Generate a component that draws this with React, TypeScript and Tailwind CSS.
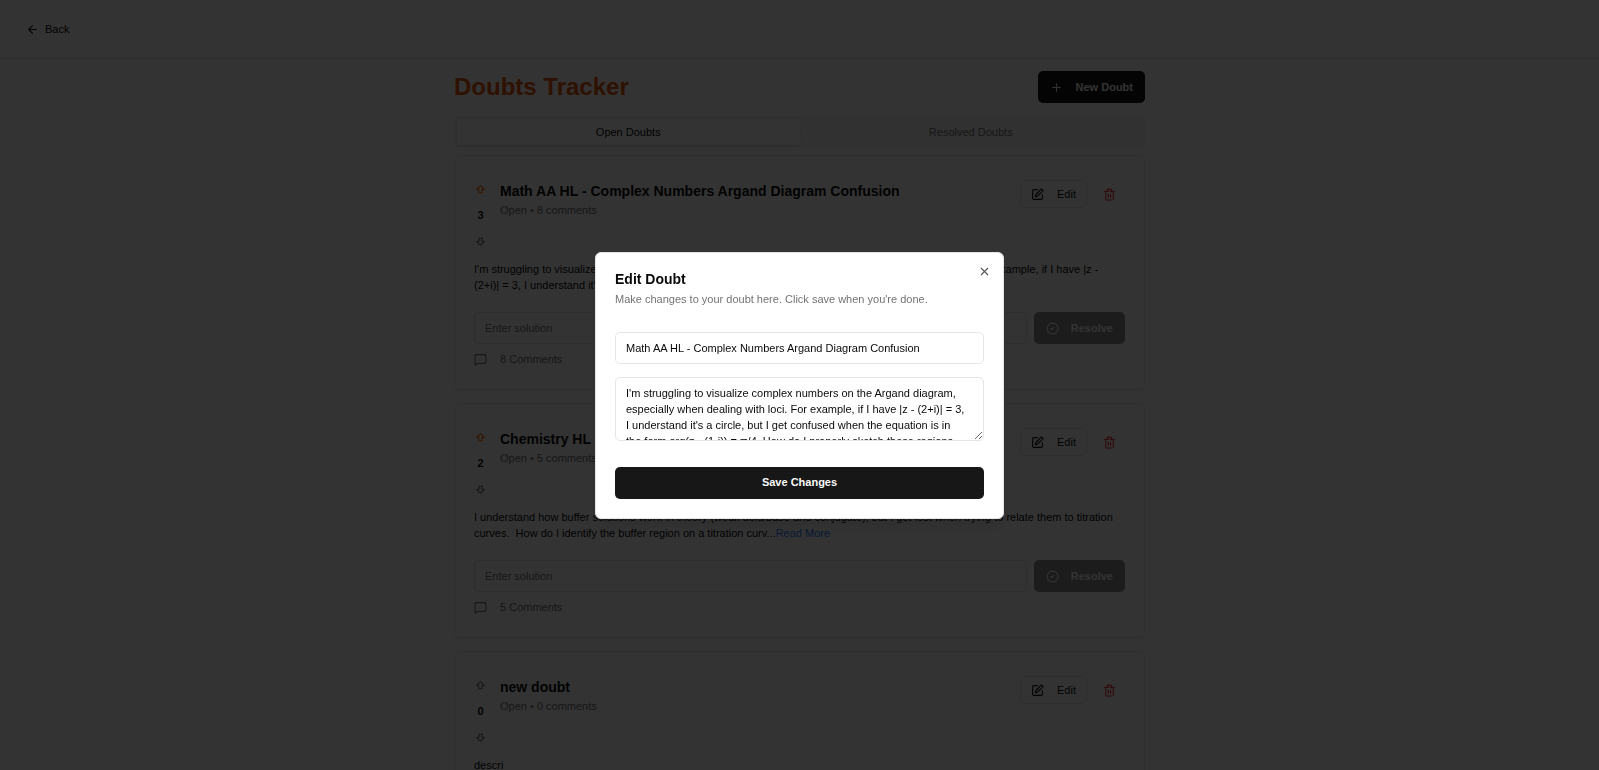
import { useState } from 'react';
import type { ReactNode } from 'react';
import { ArrowLeft, CircleCheck, MessageSquare, Plus, Trash2, X } from 'lucide-react';

type Doubt = {
  id: string;
  title: string;
  votes: number;
  voted: boolean;
  comments: number;
  body: string;
  truncated: boolean;
};

const doubts: Doubt[] = [
  {
    id: 'complex-numbers',
    title: 'Math AA HL - Complex Numbers Argand Diagram Confusion',
    votes: 3,
    voted: true,
    comments: 8,
    body: "I'm struggling to visualize complex numbers on the Argand diagram, especially when dealing with loci.  For example, if I have |z -\n(2+i)| = 3, I understand it's a circle, but I get confused when the equ...",
    truncated: true,
  },
  {
    id: 'buffers',
    title: 'Chemistry HL - Buffer Solutions and Titration Curves',
    votes: 2,
    voted: true,
    comments: 5,
    body: 'I understand how buffer solutions work in theory (weak acid/base and conjugate), but I get lost when trying to relate them to titration curves.  How do I identify the buffer region on a titration curv...',
    truncated: true,
  },
  {
    id: 'new-doubt',
    title: 'new doubt',
    votes: 0,
    voted: false,
    comments: 0,
    body: 'descri',
    truncated: false,
  },
];

const editedBody =
  "I'm struggling to visualize complex numbers on the Argand diagram, especially when dealing with loci. For example, if I have |z - (2+i)| = 3,\nI understand it's a circle, but I get confused when the equation is in\nthe form arg(z - (1-i)) = π/4. How do I properly sketch these regions\nand find their intersections?";

function Icon({ children }: { children: ReactNode }) {
  return (
    <svg
      viewBox="0 0 24 24"
      fill="none"
      stroke="currentColor"
      strokeWidth="2"
      strokeLinecap="round"
      strokeLinejoin="round"
      aria-hidden="true"
      className="size-[13px]"
    >
      {children}
    </svg>
  );
}

function DoubtCard({ doubt }: { doubt: Doubt }) {
  return (
    <article className="rounded-md border border-neutral-200 bg-white p-[19px] shadow-xs">
      <div className="flex items-start">
        <div className="flex w-[13px] flex-col items-center">
          <button
            aria-label="Upvote"
            className={
              doubt.voted
                ? 'flex h-7 items-center text-orange-500'
                : 'flex h-7 items-center text-neutral-500'
            }
          >
            <Icon>
              <path d="M9 18v-6H5l7-7 7 7h-4v6H9z" />
            </Icon>
          </button>
          <span className="h-6 text-[11px] leading-6 font-bold">{doubt.votes}</span>
          <button aria-label="Downvote" className="flex h-7 items-center text-neutral-500">
            <Icon>
              <path d="M15 6v6h4l-7 7-7-7h4V6h6z" />
            </Icon>
          </button>
        </div>
        <div className="ml-[13px] flex-1 pt-1.5">
          <h2 className="text-[14px] leading-5 font-bold">{doubt.title}</h2>
          <p className="text-[11px] leading-[18px] text-neutral-500">
            Open • {doubt.comments} comments
          </p>
        </div>
        <div className="flex items-center gap-1.5 pt-[5px]">
          <button className="flex h-7 items-center gap-[13px] rounded-[5px] border border-neutral-200 px-2.5 text-[11px] font-medium">
            <Icon>
              <path d="M12 3H5a2 2 0 0 0-2 2v14a2 2 0 0 0 2 2h14a2 2 0 0 0 2-2v-7" />
              <path d="M18.375 2.625a2.121 2.121 0 1 1 3 3L12 15l-4 1 1-4Z" />
            </Icon>
            Edit
          </button>
          <button
            aria-label="Delete doubt"
            className="flex h-7 w-8 items-center justify-center text-red-500"
          >
            <Trash2 size={13} />
          </button>
        </div>
      </div>
      <p className="mt-1.5 text-[11px] leading-4 whitespace-pre-wrap">
        {doubt.body}
        {doubt.truncated && (
          <a href="#" className="text-blue-500">
            Read More
          </a>
        )}
      </p>
      <div className="mt-[19px] flex gap-[7px]">
        <input
          aria-label="Solution"
          placeholder="Enter solution"
          className="h-8 min-w-0 flex-1 rounded-[5px] border border-neutral-200 px-2.5 text-[11px] placeholder:text-neutral-500"
        />
        <button
          disabled
          className="flex h-8 items-center gap-3 rounded-[5px] bg-neutral-900 px-3 text-[11px] font-bold text-neutral-50 opacity-50"
        >
          <CircleCheck size={13} />
          Resolve
        </button>
      </div>
      <button className="mt-1 flex h-[22px] items-center gap-[13px] text-[11px] text-neutral-500">
        <MessageSquare size={13} />
        {doubt.comments} Comments
      </button>
    </article>
  );
}

function EditDialog() {
  const [title, setTitle] = useState(doubts[0].title);
  const [body, setBody] = useState(editedBody);

  return (
    <div className="fixed inset-0 flex items-center justify-center bg-black/80">
      <div
        role="dialog"
        aria-modal="true"
        aria-labelledby="dialog-title"
        className="relative w-full max-w-[409px] rounded-md border border-neutral-200 bg-white p-[19px] shadow-lg"
      >
        <h2 id="dialog-title" className="text-[14px] leading-[14px] font-bold">
          Edit Doubt
        </h2>
        <p className="mt-[5px] text-[11px] leading-4 text-neutral-500">
          Make changes to your doubt here. Click save when you're done.
        </p>
        <input
          aria-label="Title"
          value={title}
          onChange={(e) => setTitle(e.target.value)}
          className="mt-[25px] block h-8 w-full rounded-[5px] border border-neutral-200 px-2.5 text-[11px]"
        />
        <textarea
          aria-label="Description"
          value={body}
          onChange={(e) => setBody(e.target.value)}
          className="mt-[13px] block h-16 w-full rounded-[5px] border border-neutral-200 px-2.5 py-[7px] text-[11px] leading-4 [scrollbar-width:none]"
        />
        <button className="mt-[26px] h-8 w-full rounded-[5px] bg-neutral-900 text-[11px] font-bold text-neutral-50">
          Save Changes
        </button>
        <button aria-label="Close" className="absolute top-3 right-3 opacity-70">
          <X size={13} />
        </button>
      </div>
    </div>
  );
}

export default function App() {
  return (
    <div className="h-screen overflow-hidden bg-white font-['Liberation_Sans',Arial,sans-serif] text-neutral-950">
      <header className="flex h-[59px] items-center border-b border-neutral-200 px-[26px]">
        <a href="#" className="flex items-center gap-1.5 text-[11px] font-medium">
          <ArrowLeft size={13} />
          Back
        </a>
      </header>
      <main className="mx-auto max-w-[691px] pt-3">
        <div className="flex items-center justify-between">
          <h1 className="text-[24px] leading-8 font-bold text-[#ea580c]">Doubts Tracker</h1>
          <button className="flex h-8 items-center gap-[13px] rounded-[5px] bg-neutral-900 px-3 text-[11px] font-bold text-neutral-50">
            <Plus size={13} />
            New Doubt
          </button>
        </div>
        <div
          role="tablist"
          className="mt-[13px] grid h-8 grid-cols-2 rounded-[5px] bg-neutral-100 p-[3px] text-[11px] font-medium"
        >
          <button role="tab" aria-selected="true" className="rounded-[3px] bg-white shadow-sm">
            Open Doubts
          </button>
          <button role="tab" aria-selected="false" className="text-neutral-500">
            Resolved Doubts
          </button>
        </div>
        <div className="mt-[7px] flex flex-col gap-[13px]">
          {doubts.map((doubt) => (
            <DoubtCard key={doubt.id} doubt={doubt} />
          ))}
        </div>
      </main>
      <EditDialog />
    </div>
  );
}
